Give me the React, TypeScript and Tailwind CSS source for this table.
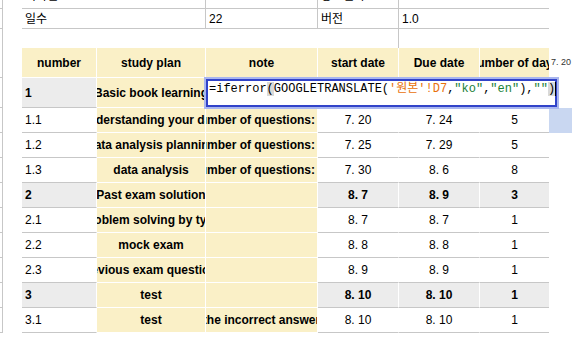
const rows = [
  { n: "1", plan: "Basic book learning", note: "", s: "", d: "", days: "", bold: true },
  { n: "1.1", plan: "Understanding your data", note: "Number of questions:", s: "7. 20", d: "7. 24", days: "5" },
  { n: "1.2", plan: "Data analysis planning", note: "Number of questions:", s: "7. 25", d: "7. 29", days: "5" },
  { n: "1.3", plan: "data analysis", note: "Number of questions:", s: "7. 30", d: "8. 6", days: "8" },
  { n: "2", plan: "Past exam solution", note: "", s: "8. 7", d: "8. 9", days: "3", bold: true },
  { n: "2.1", plan: "Problem solving by type", note: "", s: "8. 7", d: "8. 7", days: "1" },
  { n: "2.2", plan: "mock exam", note: "", s: "8. 8", d: "8. 8", days: "1" },
  { n: "2.3", plan: "Previous exam questions", note: "", s: "8. 9", d: "8. 9", days: "1" },
  { n: "3", plan: "test", note: "", s: "8. 10", d: "8. 10", days: "1", bold: true },
  { n: "3.1", plan: "test", note: "the incorrect answer", s: "8. 10", d: "8. 10", days: "1" },
];

const Strip = ({ tick = true }: { tick?: boolean }) => (
  <>
    <div className={`w-[3px] shrink-0 border-r border-[#c7c7c7] ${tick ? "border-b" : ""}`} />
    <div className="w-[19px] shrink-0" />
  </>
);

const FormulaBox = () => (
  <div className="absolute left-[204px] top-[77px] w-[355px] h-[32px] border-2 border-[#a9b6ef]">
    <div className="h-full border-2 border-[#3143c9] bg-white pl-[1px] font-['Liberation_Mono','Noto_Sans_CJK_KR',monospace] text-[12px] leading-[16px] text-black whitespace-nowrap">
      =iferror<span className="bg-[#d9d9d9]">(</span>GOOGLETRANSLATE(
      <span className="text-[#e8710a]">'원본'!D7</span>,
      <span className="text-[#188038]">"ko"</span>,
      <span className="text-[#188038]">"en"</span>),
      <span className="text-[#188038]">""</span>
      <span className="bg-[#d9d9d9]">)</span>
      <span className="inline-block w-[1px] h-[14px] bg-black align-middle" />
    </div>
  </div>
);

export default function App() {
  return (
    <div className="relative w-[572px] h-[356px] overflow-hidden bg-white text-black font-['Liberation_Sans','Noto_Sans_CJK_KR',sans-serif] text-[12px]">
      <div className="flex flex-col -mt-[16px]">
        {/* info rows */}
        <div className="flex h-[25px]">
          <Strip />
          <div className="w-[184px] border-b border-r border-[#c7c7c7] pl-[3px] flex items-center">시작일</div>
          <div className="w-[112px] border-b border-r border-[#c7c7c7] pl-[3px] flex items-center">2021. 6. 16</div>
          <div className="w-[81px] border-b border-r border-[#c7c7c7] pl-[3px] flex items-center">종료일자</div>
          <div className="w-[150px] border-b border-[#c7c7c7] pl-[3px] flex items-center">2021. 7. 7</div>
        </div>
        <div className="flex h-[20px]">
          <Strip />
          <div className="w-[184px] border-b border-r border-[#c7c7c7] pl-[3px] flex items-center">일수</div>
          <div className="w-[112px] border-b border-r border-[#c7c7c7] pl-[3px] flex items-center">22</div>
          <div className="w-[81px] border-b border-r border-[#c7c7c7] pl-[3px] flex items-center">버전</div>
          <div className="w-[150px] border-b border-[#c7c7c7] pl-[3px] flex items-center">1.0</div>
        </div>
        <div className="flex h-[19px]">
          <Strip tick={false} />
          <div className="w-[377px] border-r border-[#c7c7c7]" />
        </div>

        {/* header */}
        <div className="flex h-[30px] font-bold">
          <Strip />
          <div className="w-[75px] bg-[#faf0c7] border-b border-r border-white flex items-center justify-center">number</div>
          <div className="w-[109px] bg-[#faf0c7] border-b border-r border-white flex items-center justify-center">study plan</div>
          <div className="w-[112px] bg-[#faf0c7] border-b border-r border-white flex items-center justify-center">note</div>
          <div className="w-[81px] bg-[#faf0c7] border-b border-r border-white flex items-center justify-center">start date</div>
          <div className="w-[81px] bg-[#faf0c7] border-b border-r border-white flex items-center justify-center">Due date</div>
          <div className="w-[69px] bg-[#faf0c7] border-b border-white flex items-center justify-center overflow-hidden whitespace-nowrap">
            <span>number of days</span>
          </div>
          <div className="flex-1 flex items-center pl-[2px] text-[9px] font-normal text-[#333] whitespace-nowrap">7. 20</div>
        </div>

        {rows.map((r, i) => {
          const body = r.bold ? "bg-[#ececec] border-[#c7c7c7] font-bold" : "bg-white border-[#c7c7c7]";
          return (
            <div key={r.n} className={`flex ${i === 0 ? "h-[30px]" : "h-[25px]"}`}>
              <Strip />
              <div className={`w-[75px] border-b border-r border-r-white pl-[3px] flex items-center ${body}`}>{r.n}</div>
              <div className="w-[109px] bg-[#faf0c7] border-b border-r border-white font-bold flex items-center justify-center overflow-hidden whitespace-nowrap">
                <span>{r.plan}</span>
              </div>
              <div
                className={`w-[112px] bg-[#faf0c7] border-b border-r border-white font-bold flex items-center overflow-hidden whitespace-nowrap ${
                  r.note.startsWith("Number") ? "justify-end pr-[2px]" : "justify-center"
                }`}
              >
                <span>{r.note}</span>
              </div>
              <div className={`w-[81px] border-b border-r border-r-white flex items-center justify-center ${body}`}>{r.s}</div>
              <div className={`w-[81px] border-b border-r border-r-white flex items-center justify-center ${body}`}>{r.d}</div>
              <div className={`w-[69px] border-b flex items-center justify-center ${body}`}>{r.days}</div>
              <div className={`flex-1 ${i === 1 ? "bg-[#c9d7f1]" : ""}`} />
            </div>
          );
        })}
      </div>
      <FormulaBox />
    </div>
  );
}
